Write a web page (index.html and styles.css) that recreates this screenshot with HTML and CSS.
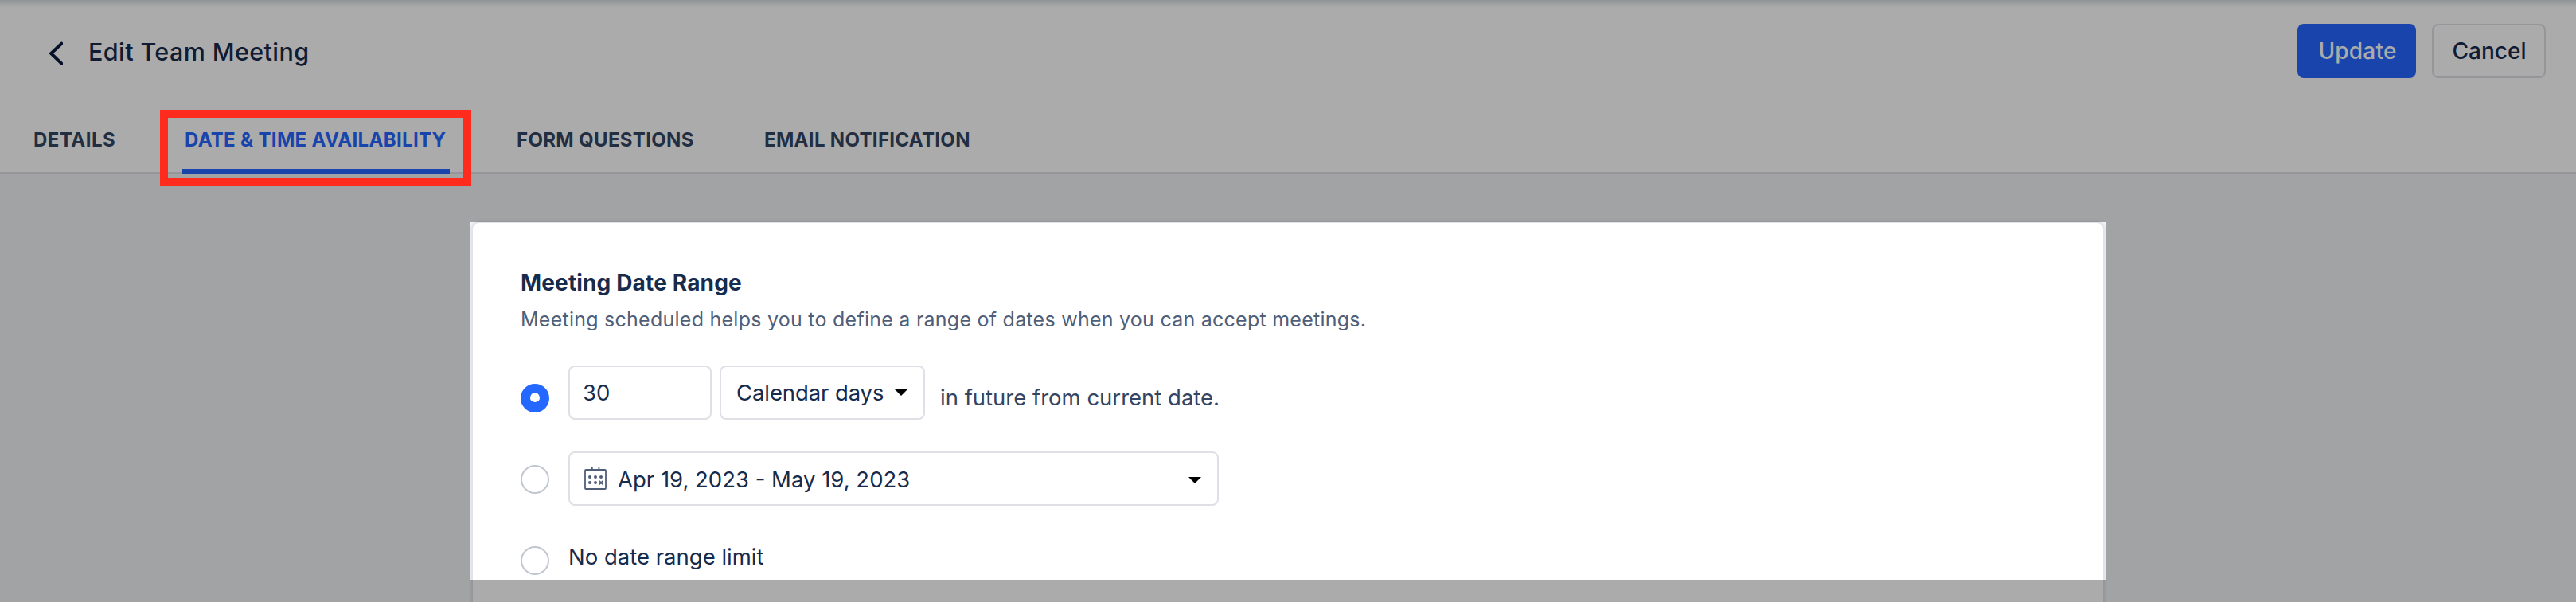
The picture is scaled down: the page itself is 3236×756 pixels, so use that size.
FILE: index.html
```html
<!DOCTYPE html>
<html lang="en">
<head>
<meta charset="utf-8">
<title>Edit Team Meeting</title>
<link rel="stylesheet" href="styles.css">
</head>
<body>
<div class="page">
  <header class="header">
    <div class="title-bar">
      <svg class="back" width="18" height="30" viewBox="0 0 18 30"><path d="M16.3 2.7 3.2 15l13.1 12.6"/></svg>
      <h1 class="title">Edit Team Meeting</h1>
      <div class="actions">
        <button class="btn btn-primary">Update</button>
        <button class="btn btn-plain">Cancel</button>
      </div>
    </div>
    <nav class="tabs">
      <a class="tab tab-details">DETAILS</a>
      <a class="tab tab-date">DATE &amp; TIME AVAILABILITY</a>
      <a class="tab tab-form">FORM QUESTIONS</a>
      <a class="tab">EMAIL NOTIFICATION</a>
    </nav>
  </header>
  <main class="card">
    <h2 class="heading">Meeting Date Range</h2>
    <p class="sub">Meeting scheduled helps you to define a range of dates when you can accept meetings.</p>
    <div class="option option-days">
      <i class="radio checked"></i>
      <div class="field field-count">30</div>
      <div class="field field-unit"><span class="unit">Calendar days</span><i class="caret"></i></div>
      <div class="after">in future from current date.</div>
    </div>
    <div class="option option-range">
      <i class="radio"></i>
      <div class="field field-range">
        <svg class="calendar" width="28" height="28" viewBox="0 0 28 28">
          <rect x="1" y="3" width="26" height="24" rx="1"/>
          <path d="M9.8 0v5M18.4 0v5"/>
          <path class="cross" d="M18.8 16.8l4.6 4.6M23.4 16.8l-4.6 4.6"/>
          <g class="dots">
            <circle cx="7" cy="12" r="2"/><circle cx="14" cy="12" r="2"/><circle cx="21" cy="12" r="2"/>
            <circle cx="7" cy="19" r="2"/><circle cx="14" cy="19" r="2"/>
          </g>
        </svg>
        <span class="range">Apr 19, 2023 - May 19, 2023</span><i class="caret"></i>
      </div>
    </div>
    <div class="option option-none">
      <i class="radio"></i>
      <div class="none">No date range limit</div>
    </div>
  </main>
  <div class="spotlight"></div>
  <div class="highlight"></div>
</div>
</body>
</html>
```
FILE: styles.css
```css
* { box-sizing: border-box; }
body { margin: 0; font-family: Inter, sans-serif; color: #172b4d; }
.page { position: relative; width: 3236px; height: 756px; overflow: hidden; background: #f2f4f7; }

.header { height: 218px; border-bottom: 2px solid #dfdfe6; background: #fff linear-gradient(#d6dfe0 0, #dbe3e4 2px, #f8f9f9 7px, #fff 10px); }
.title-bar { display: flex; height: 128px; padding: 0 38px 0 61px; align-items: center; }
.back { margin-top: 6px; fill: none; stroke: #09183d; stroke-width: 4; stroke-linecap: round; }
.title { margin: 1px 0 0 32px; font-size: 30.5px; font-weight: 450; letter-spacing: .4px; }
.actions { display: flex; gap: 20px; margin-left: auto; }
.btn { height: 68px; padding: 0; border: 0; border-radius: 8px; font: 500 28px Inter, sans-serif; }
.btn-primary { width: 149px; padding-left: 2px; background: #2566ff; color: #fff; letter-spacing: .2px; }
.btn-plain { width: 143px; padding-left: 1px; background: #fff; border: 2px solid #dfdfe6; color: #172b4d; }

.tabs { display: flex; padding-left: 42px; font-size: 24px; font-weight: 650; line-height: 95px; letter-spacing: .33px; white-space: nowrap; color: #344563; }
.tab-details { width: 187px; letter-spacing: .5px; }
.tab-date { width: 336px; height: 90px; padding-left: 3px; margin-right: 84px; color: #2566ff; border-bottom: 6px solid #2566ff; }
.tab-form { width: 311px; }

.card { width: 2052px; height: 520px; margin: 60px 0 0 592px; padding: 55px 60px; background: #fff; border: 2px solid #e1e3eb; border-radius: 10px; box-shadow: 0 0 4px rgba(23, 43, 77, .12); }
.heading { margin: 0; font-size: 28px; font-weight: 650; line-height: 40px; letter-spacing: .15px; }
.sub { margin: 6px 0 0; font-size: 25px; line-height: 40px; letter-spacing: .25px; color: #505f79; }

.option { display: flex; font-size: 27.5px; align-items: flex-start; height: 68px; }
.option-days { margin-top: 38px; }
.option-range, .option-none { margin-top: 40px; }
.radio { width: 36px; height: 36px; border: 2px solid #c1c7d0; border-radius: 50%; margin-right: 24px; }
.option-days .radio { margin-top: 23px; }
.option-range .radio { margin-top: 17px; }
.option-none .radio { margin-top: 11px; }
.checked { border: 12px solid #2568ff; border-top-width: 11px; border-bottom-width: 13px; }

.field { display: flex; align-items: center; height: 68px; border: 2px solid #dfdfe6; border-radius: 8px; padding: 0 20px 0 18px; margin-right: 10px; }
.field-count { width: 180px; padding-left: 16px; }
.field-unit { width: 258px; padding-left: 19px; margin-right: 19px; }
.unit { letter-spacing: -.1px; }
.field-range { width: 817px; }
.caret { border: 8px solid transparent; border-top-color: #000; border-bottom: 0; margin-left: auto; }
.field-range .caret { margin-top: 4px; }
.after { margin-top: 6px; line-height: 68px; color: #344563; }
.calendar { fill: none; stroke: #505f79; stroke-width: 1.8; margin-right: 14px; }
.cross { stroke-width: 1.7; }
.dots { fill: #505f79; stroke: none; }
.range { margin-top: 2px; }
.none { line-height: 49px; }

.spotlight { position: absolute; left: 590px; top: 279px; width: 2055px; height: 450px; box-shadow: 0 0 0 3300px rgba(0, 0, 0, .33); }
.highlight { position: absolute; left: 201px; top: 138px; width: 391px; height: 96px; border: 10px solid #ff2b1c; }
```
